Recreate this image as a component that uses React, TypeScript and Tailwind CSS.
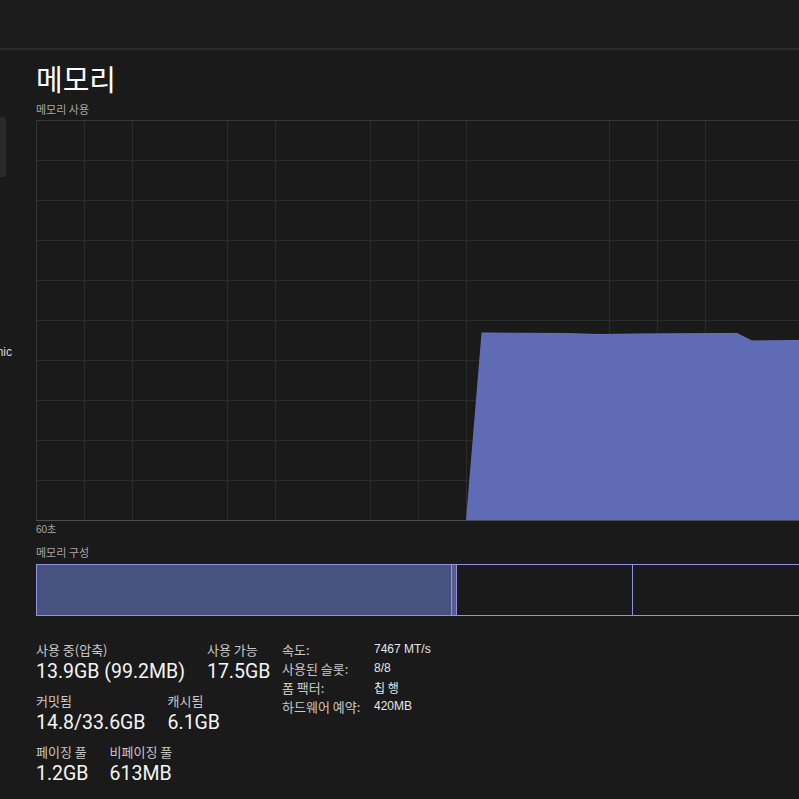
import React from "react";

const KR = "font-['Noto_Sans_CJK_KR',sans-serif]";
const LAT = "font-['Liberation_Sans','Noto_Sans_CJK_KR',sans-serif]";
const VAL = "font-['Roboto','Noto_Sans_CJK_KR',sans-serif]";

function Chart() {
  const hLines = [40, 80, 120, 160, 200, 240, 280, 320, 360];
  const vLines = [48, 96, 191, 239, 334, 382, 430, 573, 621, 669];
  return (
    <div className="h-[401px] w-[764px] shrink-0">
      <svg width="764" height="401" viewBox="0 0 764 401" className="block">
        {hLines.map((y) => (
          <line key={"h" + y} x1="0" x2="764" y1={y + 0.5} y2={y + 0.5} stroke="#2b2b2b" strokeWidth="1" />
        ))}
        {vLines.map((x) => (
          <line key={"v" + x} x1={x + 0.5} x2={x + 0.5} y1="0" y2="401" stroke="#2b2b2b" strokeWidth="1" />
        ))}
        <polygon
          points="430,400 445.5,213 527,213.5 564,214.5 600,214 701,213.5 716,221 764,220.5 764,400"
          fill="#5f6cb5"
        />
        <polyline
          points="445.5,213 527,213.5 564,214.5 600,214 701,213.5 716,221 764,220.5"
          fill="none"
          stroke="#6674bd"
          strokeWidth="1"
        />
        <line x1="0" x2="764" y1="0.5" y2="0.5" stroke="#383838" strokeWidth="1" />
        <line x1="0.5" x2="0.5" y1="0" y2="401" stroke="#333333" strokeWidth="1" />
        <line x1="0" x2="764" y1="400.5" y2="400.5" stroke="#4e4e4e" strokeWidth="1" />
      </svg>
    </div>
  );
}

function Stat({ label, value }: { label: string; value: string }) {
  return (
    <div className="flex flex-col whitespace-nowrap">
      <div className={`${KR} text-[13px] leading-[16px] text-[#c8c8c8]`}>{label}</div>
      <div className={`${VAL} text-[19.5px] leading-[27px] text-[#f4f4f4]`}>{value}</div>
    </div>
  );
}

export default function App() {
  const specs: [string, string, boolean][] = [
    ["속도:", "7467 MT/s", false],
    ["사용된 슬롯:", "8/8", false],
    ["폼 팩터:", "칩 행", true],
    ["하드웨어 예약:", "420MB", false],
  ];
  return (
    <div className={`w-[799px] h-[799px] overflow-hidden bg-[#1a1a1a] text-white flex flex-col ${KR}`}>
      <div className="h-[50px] shrink-0 bg-[#1b1b1b] border-b-2 border-[#2c2c2c]" />
      <div className="flex flex-1 min-h-0">
        {/* left nav fragment */}
        <div className="w-[36px] shrink-0 flex flex-col">
          <div className="mt-[67px] h-[60px] w-[6px] rounded-r-[3px] bg-[#2a2a2a]" />
          <div className="mt-[167px] w-[12px] overflow-hidden flex justify-end">
            <span className={`${LAT} text-[12px] leading-[16px] text-[#d6d6d6] whitespace-nowrap`}>nic</span>
          </div>
        </div>

        {/* main */}
        <div className="flex-1 min-w-0 flex flex-col overflow-hidden">
          <div className="mt-[11px] text-[29px] leading-[34px] text-white whitespace-nowrap">메모리</div>
          <div className="mt-[8px] text-[11px] leading-[13px] text-[#a6a6a6] whitespace-nowrap">메모리 사용</div>
          <div className="mt-[4px]">
            <Chart />
          </div>
          <div className={`mt-[2px] ${LAT} text-[10px] leading-[14px] text-[#a6a6a6]`}>60초</div>
          <div className="mt-[8px] text-[11px] leading-[14px] text-[#a6a6a6] whitespace-nowrap">메모리 구성</div>

          <div className="mt-[5px] h-[52px] w-[780px] shrink-0 flex border border-[#8f94dc]">
            <div className="w-[414px] shrink-0 bg-[#475281]" />
            <div className="w-[5px] shrink-0 border-l border-[#8f94dc] bg-[#565e90]" />
            <div className="w-[176px] shrink-0 border-l border-[#8f94dc]" />
            <div className="flex-1 border-l border-[#8f94dc]" />
          </div>

          <div className="mt-[24px] flex">
            <div className="w-[246px] shrink-0 pt-[2px] flex flex-col gap-[8px]">
              <div className="flex gap-[22px]">
                <Stat label="사용 중(압축)" value="13.9GB (99.2MB)" />
                <Stat label="사용 가능" value="17.5GB" />
              </div>
              <div className="flex gap-[22px]">
                <Stat label="커밋됨" value="14.8/33.6GB" />
                <Stat label="캐시됨" value="6.1GB" />
              </div>
              <div className="flex gap-[21px]">
                <Stat label="페이징 풀" value="1.2GB" />
                <Stat label="비페이징 풀" value="613MB" />
              </div>
            </div>
            <div className="flex flex-col">
              {specs.map(([k, v, kr]) => (
                <div key={k} className="flex h-[19px] items-center whitespace-nowrap">
                  <div className="w-[92px] shrink-0 text-[13px] leading-[19px] text-[#c8c8c8]">{k}</div>
                  <div className={`${kr ? KR : LAT} text-[12px] leading-[19px] text-[#e6e6e6]`}>{v}</div>
                </div>
              ))}
            </div>
          </div>
        </div>
      </div>
    </div>
  );
}
